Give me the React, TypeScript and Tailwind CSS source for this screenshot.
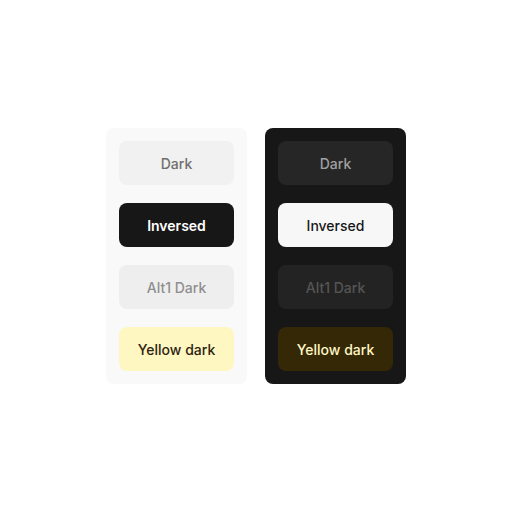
import React from "react";

const Btn = ({ label, cls }: { label: string; cls: string }) => (
  <div className={`flex h-[44px] w-[115px] items-center justify-center rounded-[8px] text-[14px] font-medium ${cls}`}>
    {label}
  </div>
);

export default function App() {
  return (
    <div
      className="flex h-[512px] w-[512px] items-start justify-center gap-[18px] bg-white pt-[128px]"
      style={{ fontFamily: "Inter, 'Noto Sans', sans-serif" }}
    >
      <div className="flex w-[141px] flex-col items-center gap-[18px] rounded-[8px] bg-[#f9f9f9] py-[13px]">
        <Btn label="Dark" cls="bg-[#f1f1f1] text-[#6f6f6f]" />
        <Btn label="Inversed" cls="bg-[#171717] text-white font-semibold" />
        <Btn label="Alt1 Dark" cls="bg-[#eeeeee] text-[#8f8f8f]" />
        <Btn label="Yellow dark" cls="bg-[#fff7c2] text-[#2e2410]" />
      </div>
      <div className="flex w-[141px] flex-col items-center gap-[18px] rounded-[8px] bg-[#171717] py-[13px]">
        <Btn label="Dark" cls="bg-[#262626] text-[#a0a0a0]" />
        <Btn label="Inversed" cls="bg-[#f7f7f7] text-[#171717]" />
        <Btn label="Alt1 Dark" cls="bg-[#232323] text-[#555555]" />
        <Btn label="Yellow dark" cls="bg-[#352806] text-[#fff6c4]" />
      </div>
    </div>
  );
}
